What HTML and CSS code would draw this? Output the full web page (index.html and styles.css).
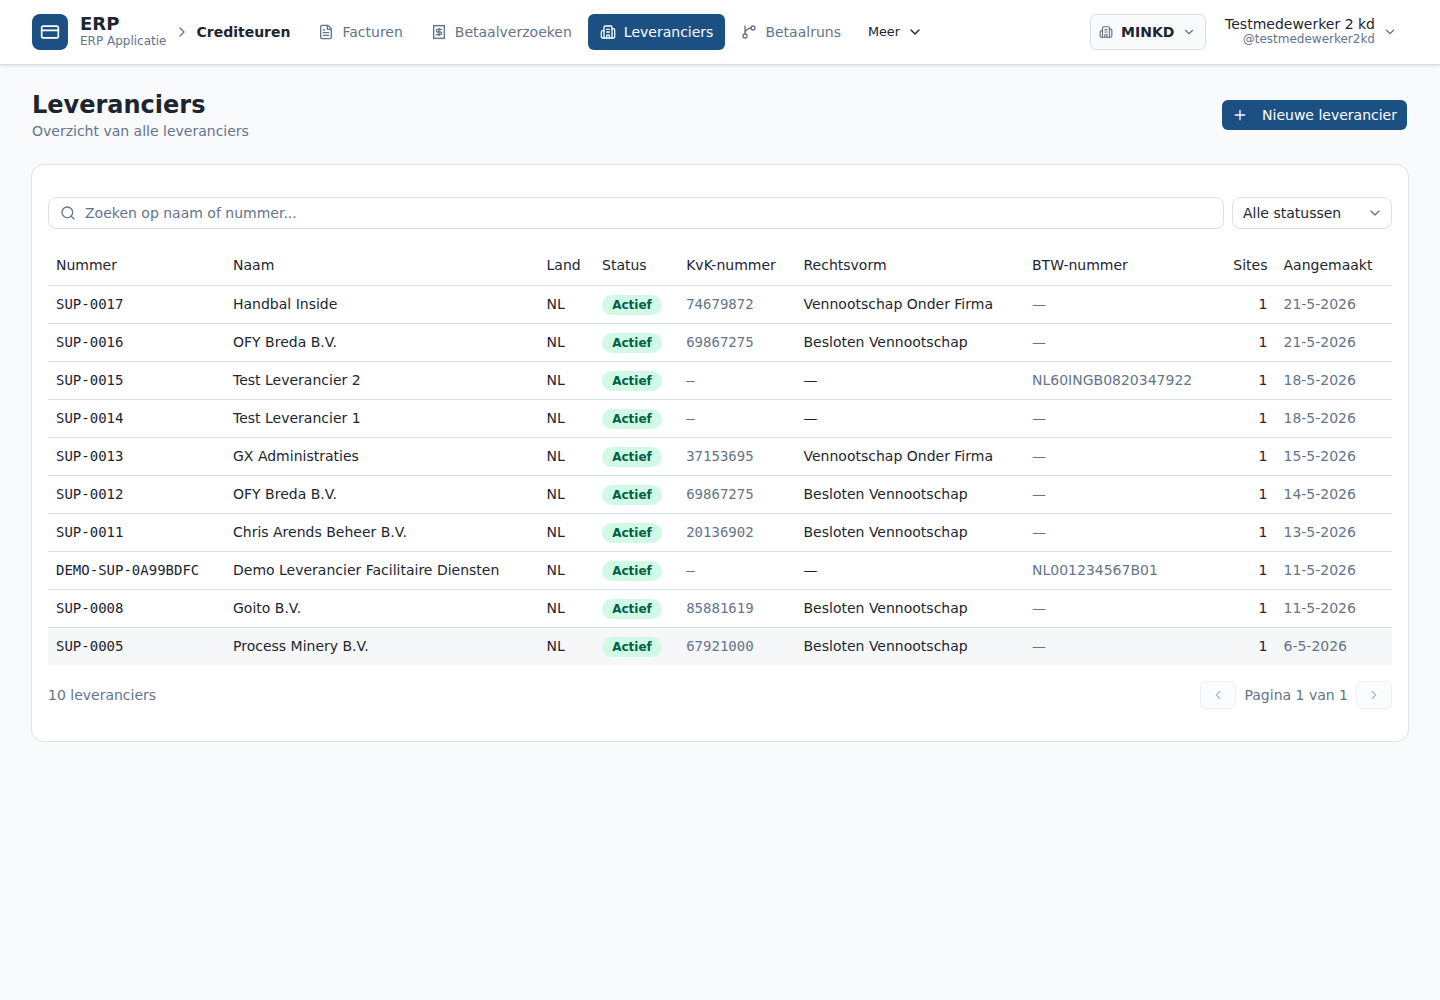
FILE: index.html
```html
<!DOCTYPE html>
<html lang="nl">
<head>
    <meta charset="UTF-8">
    <meta name="viewport" content="width=device-width, initial-scale=1.0">
    <title>Leveranciers - ERP Applicatie</title>
    <link rel="stylesheet" href="styles.css">
</head>
<body>
    <svg class="sprite" aria-hidden="true">
        <symbol id="chevron-down" viewBox="0 0 24 24"><path d="m6 9 6 6 6-6"/></symbol>
        <symbol id="chevron-right" viewBox="0 0 24 24"><path d="m9 18 6-6-6-6"/></symbol>
        <symbol id="chevron-left" viewBox="0 0 24 24"><path d="m15 18-6-6 6-6"/></symbol>
        <symbol id="building" viewBox="0 0 24 24">
            <path d="M10 12h4M10 8h4M14 21v-3a2 2 0 0 0-4 0v3"/>
            <path d="M6 10H4a2 2 0 0 0-2 2v7a2 2 0 0 0 2 2h16a2 2 0 0 0 2-2V9a2 2 0 0 0-2-2h-2"/>
            <path d="M6 21V5a2 2 0 0 1 2-2h8a2 2 0 0 1 2 2v16"/>
        </symbol>
    </svg>

    <header class="topbar">
        <a href="#" class="brand">
            <span class="brand-logo">
                <svg class="icon icon-20" viewBox="0 0 24 24"><rect x="2" y="5" width="20" height="14" rx="2"/><path d="M2 10h20"/></svg>
            </span>
            <span class="brand-text">
                <span class="brand-name">ERP</span>
                <span class="brand-sub">ERP Applicatie</span>
            </span>
        </a>
        <svg class="icon icon-16 crumb-arrow"><use href="#chevron-right"/></svg>
        <span class="module">Crediteuren</span>

        <nav class="nav">
            <a href="#" class="nav-link">
                <svg class="icon icon-16" viewBox="0 0 24 24"><path d="M6 22a2 2 0 0 1-2-2V4a2 2 0 0 1 2-2h8a2.400 2.400 0 0 1 1.704.706l3.588 3.588A2.400 2.400 0 0 1 20 8v12a2 2 0 0 1-2 2z"/><path d="M14 2v5a1 1 0 0 0 1 1h5M10 9H8M16 13H8M16 17H8"/></svg>
                Facturen
            </a>
            <a href="#" class="nav-link">
                <svg class="icon icon-16" viewBox="0 0 24 24"><path d="M4 2v20l2-1 2 1 2-1 2 1 2-1 2 1 2-1 2 1V2l-2 1-2-1-2 1-2-1-2 1-2-1-2 1Z"/><path d="M16 8h-6a2 2 0 1 0 0 4h4a2 2 0 1 1 0 4H8M12 17.500v-11"/></svg>
                Betaalverzoeken
            </a>
            <a href="#" class="nav-link active">
                <svg class="icon icon-16"><use href="#building"/></svg>
                Leveranciers
            </a>
            <a href="#" class="nav-link">
                <svg class="icon icon-16" viewBox="0 0 24 24"><circle cx="18" cy="6" r="3"/><circle cx="6" cy="18" r="3"/><path d="M15 6a9 9 0 0 0-9 9V3"/></svg>
                Betaalruns
            </a>
            <button type="button" class="more-btn">
                Meer
                <svg class="icon icon-16"><use href="#chevron-down"/></svg>
            </button>
        </nav>

        <div class="topbar-right">
            <button type="button" class="company-btn">
                <svg class="icon icon-14"><use href="#building"/></svg>
                <span class="company-name">MINKD</span>
                <svg class="icon icon-14"><use href="#chevron-down"/></svg>
            </button>
            <button type="button" class="user-btn">
                <span class="user-text">
                    <span class="user-name">Testmedewerker 2 kd</span>
                    <span class="user-handle">@testmedewerker2kd</span>
                </span>
                <svg class="icon icon-14"><use href="#chevron-down"/></svg>
            </button>
        </div>
    </header>

    <main class="page">
        <div class="page-header">
            <div>
                <h1>Leveranciers</h1>
                <p class="subtitle">Overzicht van alle leveranciers</p>
            </div>
            <button type="button" class="new-btn">
                <svg class="icon icon-16" viewBox="0 0 24 24"><path d="M5 12h14M12 5v14"/></svg>
                Nieuwe leverancier
            </button>
        </div>

        <section class="card">
            <div class="filters">
                <label class="search">
                    <svg class="icon icon-16" viewBox="0 0 24 24"><circle cx="11" cy="11" r="8"/><path d="m21 21-4.340-4.340"/></svg>
                    <input type="text" placeholder="Zoeken op naam of nummer...">
                </label>
                <button type="button" class="status-select">
                    Alle statussen
                    <svg class="icon icon-16"><use href="#chevron-down"/></svg>
                </button>
            </div>

            <table class="suppliers">
                <colgroup>
                    <col class="col-nummer">
                    <col class="col-naam">
                    <col class="col-land">
                    <col class="col-status">
                    <col class="col-kvk">
                    <col class="col-rechtsvorm">
                    <col class="col-btw">
                    <col class="col-sites">
                    <col class="col-datum">
                </colgroup>
                <thead>
                    <tr>
                        <th>Nummer</th>
                        <th>Naam</th>
                        <th>Land</th>
                        <th>Status</th>
                        <th>KvK-nummer</th>
                        <th>Rechtsvorm</th>
                        <th>BTW-nummer</th>
                        <th class="right">Sites</th>
                        <th>Aangemaakt</th>
                    </tr>
                </thead>
                <tbody>
                    <tr>
                        <td class="mono">SUP-0017</td>
                        <td>Handbal Inside</td>
                        <td>NL</td>
                        <td><span class="badge">Actief</span></td>
                        <td class="mono muted">74679872</td>
                        <td>Vennootschap Onder Firma</td>
                        <td class="muted">—</td>
                        <td class="right">1</td>
                        <td class="muted">21-5-2026</td>
                    </tr>
                    <tr>
                        <td class="mono">SUP-0016</td>
                        <td>OFY Breda B.V.</td>
                        <td>NL</td>
                        <td><span class="badge">Actief</span></td>
                        <td class="mono muted">69867275</td>
                        <td>Besloten Vennootschap</td>
                        <td class="muted">—</td>
                        <td class="right">1</td>
                        <td class="muted">21-5-2026</td>
                    </tr>
                    <tr>
                        <td class="mono">SUP-0015</td>
                        <td>Test Leverancier 2</td>
                        <td>NL</td>
                        <td><span class="badge">Actief</span></td>
                        <td class="mono muted">—</td>
                        <td>—</td>
                        <td class="muted">NL60INGB0820347922</td>
                        <td class="right">1</td>
                        <td class="muted">18-5-2026</td>
                    </tr>
                    <tr>
                        <td class="mono">SUP-0014</td>
                        <td>Test Leverancier 1</td>
                        <td>NL</td>
                        <td><span class="badge">Actief</span></td>
                        <td class="mono muted">—</td>
                        <td>—</td>
                        <td class="muted">—</td>
                        <td class="right">1</td>
                        <td class="muted">18-5-2026</td>
                    </tr>
                    <tr>
                        <td class="mono">SUP-0013</td>
                        <td>GX Administraties</td>
                        <td>NL</td>
                        <td><span class="badge">Actief</span></td>
                        <td class="mono muted">37153695</td>
                        <td>Vennootschap Onder Firma</td>
                        <td class="muted">—</td>
                        <td class="right">1</td>
                        <td class="muted">15-5-2026</td>
                    </tr>
                    <tr>
                        <td class="mono">SUP-0012</td>
                        <td>OFY Breda B.V.</td>
                        <td>NL</td>
                        <td><span class="badge">Actief</span></td>
                        <td class="mono muted">69867275</td>
                        <td>Besloten Vennootschap</td>
                        <td class="muted">—</td>
                        <td class="right">1</td>
                        <td class="muted">14-5-2026</td>
                    </tr>
                    <tr>
                        <td class="mono">SUP-0011</td>
                        <td>Chris Arends Beheer B.V.</td>
                        <td>NL</td>
                        <td><span class="badge">Actief</span></td>
                        <td class="mono muted">20136902</td>
                        <td>Besloten Vennootschap</td>
                        <td class="muted">—</td>
                        <td class="right">1</td>
                        <td class="muted">13-5-2026</td>
                    </tr>
                    <tr>
                        <td class="mono">DEMO-SUP-0A99BDFC</td>
                        <td>Demo Leverancier Facilitaire Diensten</td>
                        <td>NL</td>
                        <td><span class="badge">Actief</span></td>
                        <td class="mono muted">—</td>
                        <td>—</td>
                        <td class="muted">NL001234567B01</td>
                        <td class="right">1</td>
                        <td class="muted">11-5-2026</td>
                    </tr>
                    <tr>
                        <td class="mono">SUP-0008</td>
                        <td>Goito B.V.</td>
                        <td>NL</td>
                        <td><span class="badge">Actief</span></td>
                        <td class="mono muted">85881619</td>
                        <td>Besloten Vennootschap</td>
                        <td class="muted">—</td>
                        <td class="right">1</td>
                        <td class="muted">11-5-2026</td>
                    </tr>
                    <tr class="hovered">
                        <td class="mono">SUP-0005</td>
                        <td>Process Minery B.V.</td>
                        <td>NL</td>
                        <td><span class="badge">Actief</span></td>
                        <td class="mono muted">67921000</td>
                        <td>Besloten Vennootschap</td>
                        <td class="muted">—</td>
                        <td class="right">1</td>
                        <td class="muted">6-5-2026</td>
                    </tr>
                </tbody>
            </table>

            <div class="table-footer">
                <span>10 leveranciers</span>
                <div class="pagination">
                    <button type="button" class="page-btn" disabled><svg class="icon icon-14"><use href="#chevron-left"/></svg></button>
                    <span>Pagina 1 van 1</span>
                    <button type="button" class="page-btn" disabled><svg class="icon icon-14"><use href="#chevron-right"/></svg></button>
                </div>
            </div>
        </section>
    </main>
</body>
</html>
```
FILE: styles.css
```css
* {
    margin: 0;
    padding: 0;
    box-sizing: border-box;
}

body {
    background-color: #f9fafc;
    color: #1c2530;
    font-family: 'DejaVu Sans', sans-serif;
    font-size: 14px;
    line-height: 20px;
    min-height: 100vh;
}

button,
input {
    font: inherit;
    color: inherit;
    background: none;
    border: none;
}

a {
    color: inherit;
    text-decoration: none;
}

.sprite {
    display: none;
}

.icon {
    flex: none;
    fill: none;
    stroke: currentColor;
    stroke-width: 2;
    stroke-linecap: round;
    stroke-linejoin: round;
}

.icon-14 {
    width: 14px;
    height: 14px;
}

.icon-16 {
    width: 16px;
    height: 16px;
}

.icon-20 {
    width: 20px;
    height: 20px;
}

/* Bovenbalk */
.topbar {
    display: flex;
    align-items: center;
    height: 65px;
    padding: 0 32px;
    background-color: #fff;
    border-bottom: 1px solid #d8dfe8;
    box-shadow: 0 1px 3px rgba(0, 0, 0, 0.1);
}

.brand {
    display: flex;
    align-items: center;
    gap: 12px;
}

.brand-logo {
    display: flex;
    align-items: center;
    justify-content: center;
    width: 36px;
    height: 36px;
    border-radius: 8px;
    background-color: #1c5083;
    color: #fff;
}

.brand-text {
    display: flex;
    flex-direction: column;
}

.brand-name {
    font-size: 18px;
    font-weight: bold;
    line-height: 18px;
}

.brand-sub {
    color: #64748b;
    font-size: 12px;
    line-height: 16px;
}

.crumb-arrow {
    margin: 0 6px 0 8px;
    color: #64748b;
}

.module {
    font-weight: bold;
}

.nav {
    display: flex;
    align-items: center;
    gap: 4px;
    margin-left: 16px;
}

.nav-link {
    display: flex;
    align-items: center;
    gap: 8px;
    height: 36px;
    padding: 0 12px;
    border-radius: 6px;
    color: #64748b;
}

.nav-link.active {
    background-color: #1c5083;
    color: #fff;
}

.more-btn {
    display: flex;
    align-items: center;
    gap: 7px;
    padding: 0 11px;
    font-size: 12.8px;
}

.topbar-right {
    display: flex;
    align-items: center;
    gap: 8px;
    margin-left: auto;
}

.company-btn {
    display: flex;
    align-items: center;
    gap: 8px;
    width: 116px;
    height: 36px;
    padding: 0 8px;
    border: 1px solid #d8dfe8;
    border-radius: 6px;
    background-color: #f9fafc;
    color: #64748b;
}

.company-name {
    color: #1c2530;
    font-weight: bold;
}

.user-btn {
    display: flex;
    align-items: center;
    gap: 8px;
    padding: 0 11px;
    color: #64748b;
}

.user-text {
    display: flex;
    flex-direction: column;
    padding-bottom: 2px;
    text-align: right;
}

.user-name {
    color: #1c2530;
    line-height: 16px;
}

.user-handle {
    font-size: 12px;
    line-height: 14px;
}

/* Pagina */
.page {
    padding: 24px 32px;
}

.page-header {
    display: flex;
    align-items: center;
    justify-content: space-between;
    margin-bottom: 24px;
}

h1 {
    font-size: 24px;
    line-height: 32px;
}

.subtitle {
    color: #64748b;
}

.new-btn {
    display: flex;
    align-items: center;
    gap: 14px;
    height: 30px;
    margin-right: 1px;
    padding: 0 10px;
    border-radius: 6px;
    background-color: #1c5083;
    color: #fff;
}

.card {
    padding: 32px 16px;
    border-radius: 12px;
    background-color: #fff;
    box-shadow: 0 0 0 1px #e1e4e8;
}

.filters {
    display: flex;
    gap: 8px;
    margin-bottom: 16px;
}

.search {
    display: flex;
    flex: 1;
    align-items: center;
    gap: 9px;
    height: 32px;
    padding: 0 11px;
    border: 1px solid #d8dfe8;
    border-radius: 8px;
    color: #64748b;
}

.search input {
    flex: 1;
    outline: none;
}

.search input::placeholder {
    color: #64748b;
}

.status-select {
    display: flex;
    align-items: center;
    justify-content: space-between;
    width: 160px;
    height: 32px;
    padding: 0 8px 0 10px;
    border: 1px solid #d8dfe8;
    border-radius: 8px;
}

.status-select .icon {
    color: #64748b;
}

/* Tabel */
.suppliers {
    width: 100%;
    border-collapse: separate;
    border-spacing: 0;
    table-layout: fixed;
}

.col-nummer { width: 177px; }
.col-naam { width: 313.5px; }
.col-land { width: 55.5px; }
.col-status { width: 84.2px; }
.col-kvk { width: 117.3px; }
.col-rechtsvorm { width: 228.5px; }
.col-btw { width: 201px; }
.col-sites { width: 50.5px; }
.col-datum { width: 116.5px; }

.suppliers th,
.suppliers td {
    padding: 0 8px;
    border-bottom: 1px solid #d8dfe8;
    text-align: left;
    white-space: nowrap;
}

.suppliers th {
    height: 41px;
    font-weight: normal;
}

.suppliers td {
    height: 38px;
    padding-bottom: 2px;
}

.suppliers tbody tr:last-child td {
    height: 37px;
    border-bottom: none;
}

.suppliers .right {
    text-align: right;
}

.suppliers .mono {
    font-family: 'DejaVu Sans Mono', monospace;
}

.suppliers .muted {
    color: #64748b;
}

.hovered {
    background-color: #f6f7f9;
}

.badge {
    display: block;
    width: 60px;
    height: 20px;
    margin-top: 2px;
    border-radius: 10px;
    background-color: #d0fae5;
    color: #006045;
    font-size: 12px;
    font-weight: bold;
    text-align: center;
}

.table-footer {
    display: flex;
    align-items: center;
    justify-content: space-between;
    margin-top: 16px;
    color: #64748b;
}

.pagination {
    display: flex;
    align-items: center;
    gap: 8px;
}

.page-btn {
    display: flex;
    align-items: center;
    justify-content: center;
    width: 36px;
    height: 28px;
    border: 1px solid #d8dfe8;
    border-radius: 6px;
    background-color: #f9fafc;
    opacity: 0.5;
}
```
